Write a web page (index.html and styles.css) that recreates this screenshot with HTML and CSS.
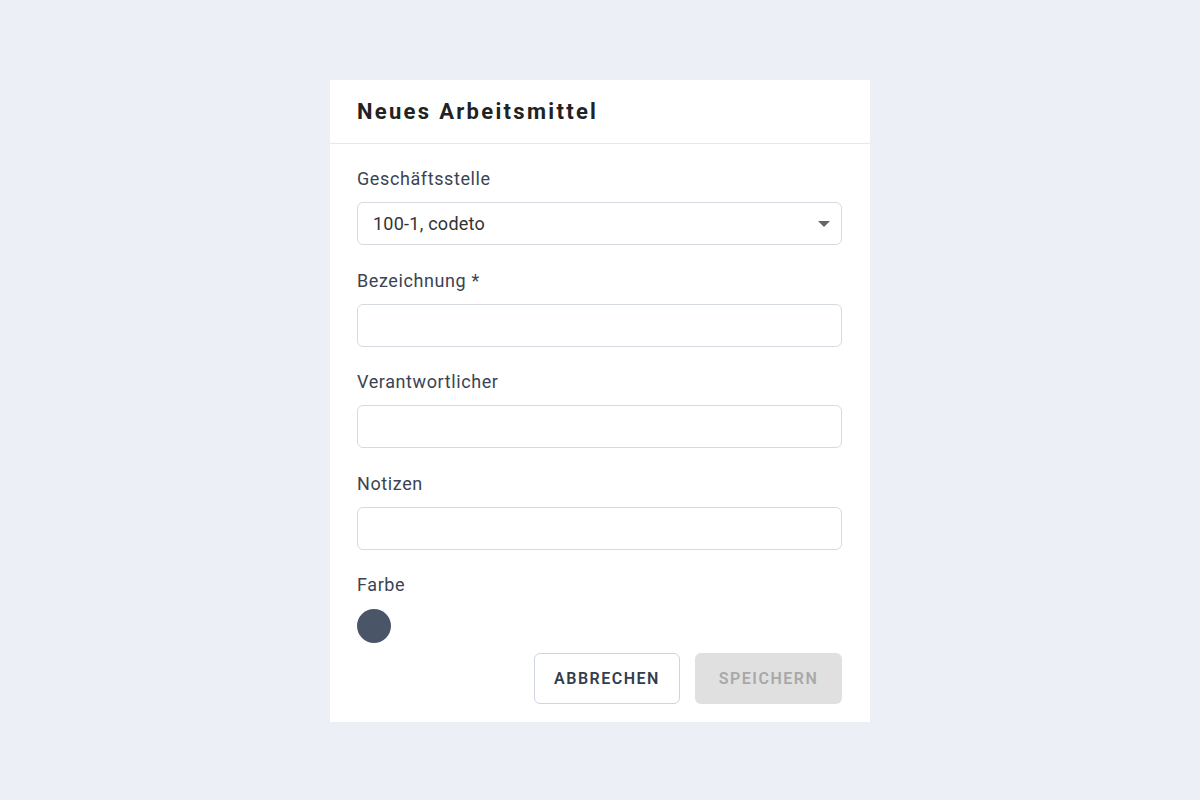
FILE: index.html
```html
<!DOCTYPE html>
<html lang="de">
<head>
  <meta charset="UTF-8" />
  <meta name="viewport" content="width=device-width, initial-scale=1.0" />
  <title>Neues Arbeitsmittel</title>
  <link rel="stylesheet" href="styles.css">
</head>
<body>
  <div class="dialog">
    <header class="dialog-header">
      <h1>Neues Arbeitsmittel</h1>
    </header>

    <form class="dialog-body">
      <div class="field">
        <label>Geschäftsstelle</label>
        <div class="select">
          <span>100-1, codeto</span>
          <svg class="caret" width="12" height="6" viewBox="0 0 12 6"><path d="M0 0h12L6 6z" fill="#666"/></svg>
        </div>
      </div>

      <div class="field">
        <label>Bezeichnung *</label>
        <input type="text" />
      </div>

      <div class="field">
        <label>Verantwortlicher</label>
        <input type="text" />
      </div>

      <div class="field">
        <label>Notizen</label>
        <input type="text" />
      </div>

      <div class="field color-field">
        <label>Farbe</label>
        <span class="swatch"></span>
      </div>

      <div class="actions">
        <button type="button" class="btn btn-outline">Abbrechen</button>
        <button type="button" class="btn btn-disabled" disabled>Speichern</button>
      </div>
    </form>
  </div>
</body>
</html>
```

FILE: styles.css
```css
body {
  font-family: Roboto, 'Liberation Sans', sans-serif;
  margin: 0;
  padding: 0;
  background: #eceff6;
  color: #333;
}

.dialog {
  width: 540px;
  margin: 80px auto 0;
  background: white;
}

.dialog-header {
  height: 63px;
  padding: 0 27px;
  display: flex;
  align-items: center;
  border-bottom: 1px solid #e6e8ec;
}

.dialog-header h1 {
  margin: 0;
  font-size: 22px;
  font-weight: 700;
  letter-spacing: 2.3px;
  color: #222;
}

.dialog-body {
  padding: 23px 28px 18px 27px;
}

.field {
  display: flex;
  flex-direction: column;
  margin-bottom: 23.5px;
}

.field label {
  font-size: 18px;
  line-height: 24px;
  letter-spacing: 0.6px;
  color: #3a4354;
  margin-bottom: 11px;
}

.field input,
.select {
  box-sizing: border-box;
  height: 43px;
  border: 1px solid #d5d9e0;
  border-radius: 6px;
  font: inherit;
  font-size: 18px;
  padding: 0 15px;
  background: white;
}

.select {
  display: flex;
  align-items: center;
  justify-content: space-between;
  letter-spacing: 0.25px;
  color: #333;
}

.caret {
  margin-right: -4px;
}

.color-field {
  margin-bottom: 10px;
}

.color-field label {
  margin-bottom: 12px;
}

.swatch {
  width: 34px;
  height: 34px;
  border-radius: 50%;
  background: #4a5668;
}

.actions {
  display: flex;
  justify-content: flex-end;
  gap: 15px;
}

.btn {
  height: 51px;
  width: 146px;
  border-radius: 6px;
  font-family: inherit;
  font-size: 16px;
  font-weight: 600;
  letter-spacing: 1.5px;
  text-transform: uppercase;
}

.btn-outline {
  background: white;
  border: 1px solid #cfd5df;
  color: #333d4d;
}

.btn-disabled {
  width: 147px;
  background: #e0e0e0;
  border: none;
  color: #a8a8a8;
}
```
